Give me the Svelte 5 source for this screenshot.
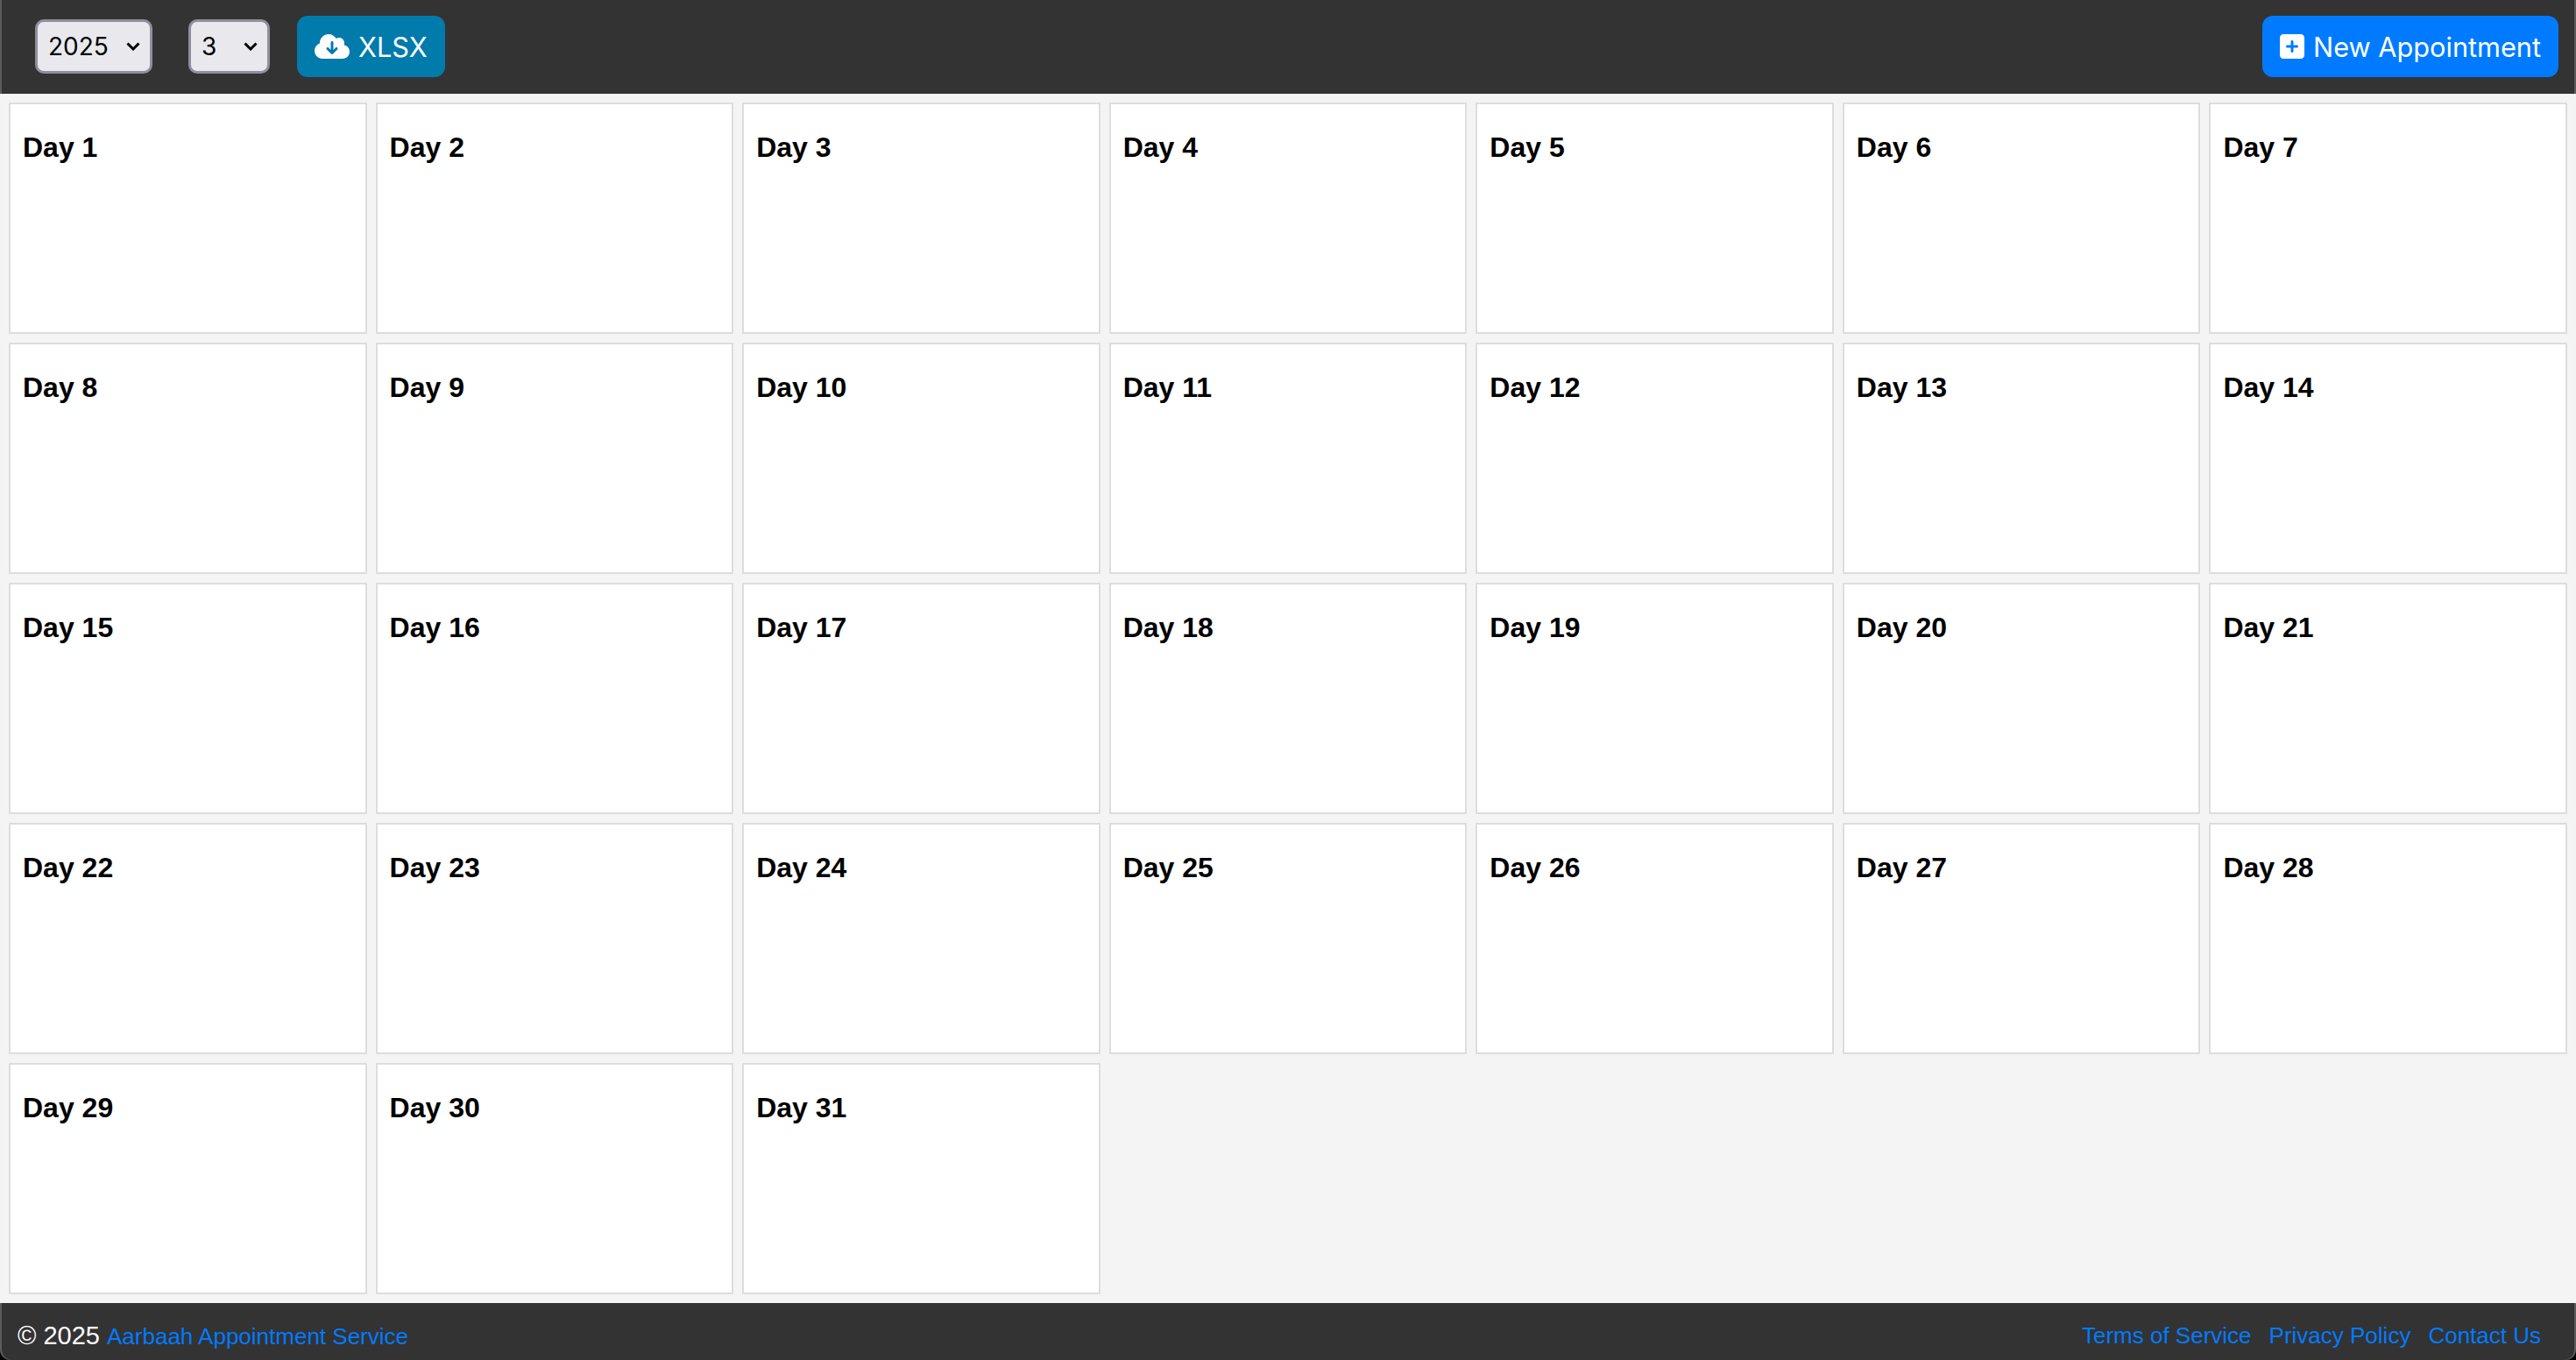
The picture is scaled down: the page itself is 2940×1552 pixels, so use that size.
<script>
  const days = Array.from({ length: 31 }, (_, i) => i + 1);
</script>

<div class="page">
  <header class="topbar">
    <div class="left">
      <select class="picker year">
        <option>2025</option>
      </select>
      <select class="picker month">
        <option>3</option>
      </select>
      <button class="btn xlsx">
        <svg viewBox="0 0 640 512" width="40" height="32" fill="currentColor">
          <path d="M144 480C64.500 480 0 415.500 0 336c0-62.800 40.200-116.200 96.200-135.900c-.1-2.700-.2-5.400-.2-8.100c0-88.400 71.600-160 160-160c59.300 0 111 32.200 138.700 80.200C409.900 102 428.300 96 448 96c53 0 96 43 96 96c0 12.200-2.300 23.800-6.400 34.600C596 238.400 640 290.100 640 352c0 70.700-57.300 128-128 128H144zm79-167l80 80c9.400 9.400 24.600 9.400 33.900 0l80-80c9.400-9.400 9.400-24.600 0-33.900s-24.600-9.400-33.900 0l-39 39V184c0-13.300-10.700-24-24-24s-24 10.700-24 24V318.100l-39-39c-9.400-9.400-24.600-9.400-33.900 0s-9.400 24.600 0 33.900z"/>
        </svg>
        XLSX
      </button>
    </div>
    <button class="btn add">
      <svg viewBox="0 0 448 512" width="28" height="32" fill="currentColor">
        <path d="M64 32C28.700 32 0 60.700 0 96V416c0 35.300 28.700 64 64 64H384c35.300 0 64-28.700 64-64V96c0-35.300-28.700-64-64-64H64zM200 344V280H136c-13.300 0-24-10.700-24-24s10.700-24 24-24h64V168c0-13.300 10.700-24 24-24s24 10.700 24 24v64h64c13.300 0 24 10.700 24 24s-10.700 24-24 24H248v64c0 13.300-10.700 24-24 24s-24-10.700-24-24z"/>
      </svg>
      New Appointment
    </button>
  </header>

  <main class="grid">
    {#each days as day}
      <div class="day">
        <h3>Day {day}</h3>
      </div>
    {/each}
  </main>

  <footer class="footer">
    <div class="copy">© 2025 <a href="#top">Aarbaah Appointment Service</a></div>
    <div class="links">
      <a href="#top">Terms of Service</a>
      <a href="#top">Privacy Policy</a>
      <a href="#top">Contact Us</a>
    </div>
  </footer>
</div>

<style>
  :global(body) {
    margin: 0;
    background: #000;
    font-family: "Liberation Sans", Arial, sans-serif;
  }

  .page {
    display: flex;
    flex-direction: column;
    height: 1552px;
    background: #000;
  }

  .topbar {
    display: flex;
    align-items: center;
    justify-content: space-between;
    height: 107px;
    padding: 0 20px 1px 40px;
    background: #333;
    box-sizing: border-box;
    box-shadow: inset 2px 0 #5c5c5c, inset -2px 0 #5c5c5c;
  }

  .left {
    display: flex;
    align-items: center;
  }

  .picker {
    appearance: none;
    height: 62px;
    box-sizing: border-box;
    font-family: Inter, sans-serif;
    font-size: 28px;
    color: #000;
    background-color: #e9e9ed;
    background-image: url("data:image/svg+xml,%3Csvg xmlns='http://www.w3.org/2000/svg' width='16' height='10'%3E%3Cpath d='M1.5 1.500 8 8l6.500-6.500' fill='none' stroke='%23000' stroke-width='3'/%3E%3C/svg%3E");
    background-repeat: no-repeat;
    background-position: right 11px center;
    border: 3px solid #8f8f9d;
    border-radius: 10px;
    padding: 0 12px;
  }

  .year {
    width: 134px;
    margin-right: 41px;
  }

  .month {
    width: 93px;
    margin-right: 31px;
  }

  .btn {
    display: flex;
    align-items: center;
    gap: 10px;
    height: 70px;
    padding: 0 20px;
    border: none;
    border-radius: 12px;
    color: #fff;
    font-family: Inter, sans-serif;
    font-size: 30.700px;
  }

  .xlsx {
    background: #007bab;
  }

  .add {
    background: #007bff;
  }

  .grid {
    flex: 1;
    min-height: 0;
    display: grid;
    grid-template-columns: repeat(7, 1fr);
    grid-template-rows: repeat(5, 1fr);
    gap: 10px;
    padding: 10px;
    background: #f4f4f4;
  }

  .day {
    background: #fff;
    border: 2px solid #ddd;
    padding: 29px 14px;
    box-sizing: border-box;
  }

  h3 {
    margin: 0;
    font-size: 32px;
    line-height: 40px;
    color: #000;
  }

  .footer {
    display: flex;
    align-items: center;
    justify-content: space-between;
    height: 65px;
    box-sizing: border-box;
    padding: 10px 40px 0 20px;
    background: #333;
    border-radius: 0 0 12px 12px;
    color: #fff;
    font-size: 26px;
    box-shadow: inset 2px 0 #5c5c5c, inset -2px 0 #5c5c5c;
  }

  .copy {
    font-size: 29px;
  }

  .footer a {
    color: #007bff;
    font-size: 26px;
    text-decoration: none;
  }

  .links {
    display: flex;
    gap: 20px;
  }
</style>
